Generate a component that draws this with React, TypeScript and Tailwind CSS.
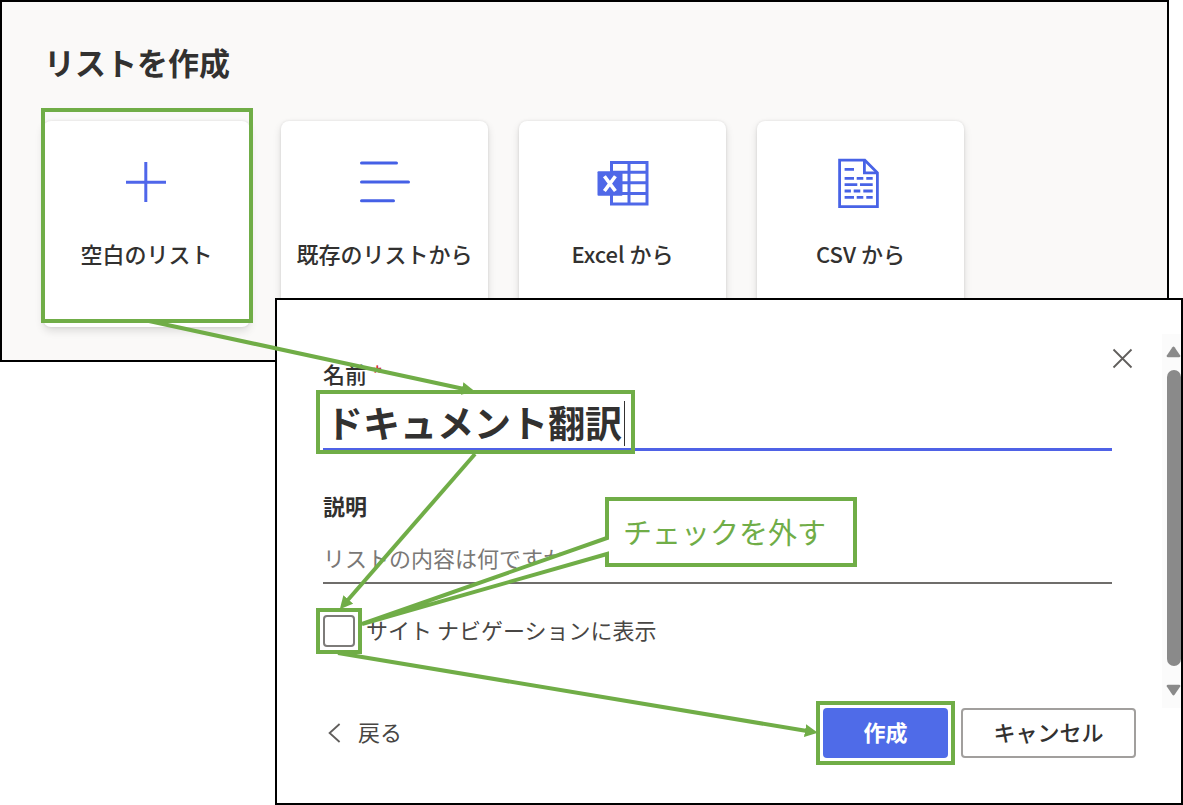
import { useState } from "react";
import type { ReactNode } from "react";

interface SourceCardProps {
  label: string;
  icon: ReactNode;
  highlighted?: boolean;
}

function PlusIcon() {
  return (
    <svg width="42" height="52" viewBox="1 0 42 52" fill="none" stroke="#4f66ea" strokeWidth="3" aria-hidden="true">
      <path d="M1 25.2h40M20.8 5v40" />
    </svg>
  );
}

function LinesIcon() {
  return (
    <svg width="52" height="52" viewBox="0 0 52 52" fill="none" stroke="#4560e6" strokeWidth="3" strokeLinecap="round" aria-hidden="true">
      <path d="M2.5 6h35M2.5 25h47M2.5 43.8h32" />
    </svg>
  );
}

function ExcelIcon() {
  return (
    <svg width="52" height="52" viewBox="0 -4 52 52" fill="none" stroke="#4f68e8" aria-hidden="true">
      <rect x="14.5" y="1.5" width="35.5" height="41.5" strokeWidth="3" />
      <path d="M32 1v42M14 11.3h36M24 21.8h26M14 32.6h36" strokeWidth="3" />
      <rect x="0.5" y="10.3" width="25" height="24.5" rx="1" fill="#4f68e8" stroke="none" />
      <path d="M7.4 15.2L18.4 30M18.4 15.2L7.4 30" stroke="#fff" strokeWidth="3.6" />
    </svg>
  );
}

function CsvIcon() {
  return (
    <svg width="42" height="52" viewBox="2 0 42 52" overflow="visible" fill="none" stroke="#4863e6" aria-hidden="true">
      <path d="M1.6 3.2h25.2l12.6 12.6v33.8H1.6z" strokeWidth="2.8" />
      <path d="M26.4 3.2v12.6h13" strokeWidth="2.8" />
      <path
        d="M6.6 12.3H16M6.6 21.3H16M18.7 21.3h6.6M28.3 21.3h6.4M6.6 27.7h12.7M22 27.7h12.7M6.6 34h6.3M15.7 34h6.6M25.3 34h9.4M6.6 40.3H16M18.7 40.3h6.6M28.3 40.3h6.4"
        strokeWidth="2.8"
      />
    </svg>
  );
}

function SourceCard({ label, icon, highlighted }: SourceCardProps) {
  return (
    <button
      type="button"
      className="relative flex h-[206px] w-[207px] shrink-0 flex-col items-center rounded-lg bg-white pt-9 shadow-[0_4px_8px_rgba(0,0,0,0.12),0_0_3px_rgba(0,0,0,0.1)]"
    >
      {icon}
      <span className="mt-[30px] text-[22px] leading-7 font-medium whitespace-nowrap text-[#323130]">{label}</span>
      {highlighted && (
        <span className="pointer-events-none absolute -top-[13px] -left-0.5 h-[215px] w-[212px] border-4 border-[#70ad47]" />
      )}
    </button>
  );
}

function CreateListPanel() {
  return (
    <section className="mr-[14px] overflow-hidden border-2 border-black bg-[#faf9f8] pt-[38px] pb-[33px] pl-[41px]">
      <h1 className="mb-[37px] pl-px text-[31px] leading-[44px] font-bold text-[#323130]">リストを作成</h1>
      <div className="flex gap-[31px]">
        <SourceCard label="空白のリスト" icon={<PlusIcon />} highlighted />
        <SourceCard label="既存のリストから" icon={<LinesIcon />} />
        <SourceCard label="Excel から" icon={<ExcelIcon />} />
        <SourceCard label="CSV から" icon={<CsvIcon />} />
      </div>
    </section>
  );
}

function ScrollBar() {
  return (
    <div className="mt-[34px] flex w-[19px] flex-col items-end bg-[#fbfbfb] pt-3 pb-3" aria-hidden="true">
      <svg width="15" height="12" viewBox="0 0 15 12" fill="#8a8a8a">
        <path d="M6.4 1.2q1.1-1.2 2.2 0l5.6 8.2q.6 1.8-1 1.8H1.8q-1.6 0-1-1.8z" />
      </svg>
      <div className="my-3 w-[14px] flex-1 rounded-full bg-[#8a8a8a]" />
      <svg className="mt-1.5" width="15" height="12" viewBox="0 0 15 12" fill="#8a8a8a">
        <path d="M6.4 10.8q1.1 1.2 2.2 0l5.6-8.2q.6-1.8-1-1.8H1.8q-1.6 0-1 1.8z" />
      </svg>
    </div>
  );
}

function ListDialog() {
  const [name, setName] = useState("ドキュメント翻訳");
  const [description, setDescription] = useState("");
  const [showInNav, setShowInNav] = useState(false);

  return (
    <section role="dialog" aria-label="リストを作成" className="relative -mt-16 ml-[275px] border-2 border-black bg-white text-[22px] text-[#323130]">
      <div className="flex">
        <form className="flex-1 pt-[59px] pb-[61px] pl-[46px]">
          <label htmlFor="list-name" className="block pb-0.5 leading-7 font-medium">
            名前 <span className="text-[#d13438]">*</span>
          </label>
          <div className="relative">
            <input
              id="list-name"
              type="text"
              value={name}
              onChange={(e) => setName(e.target.value)}
              className="block h-[62px] w-full border-b-3 border-[#4f62e6] pt-1.5 pl-[3px] text-[37px] font-bold outline-none"
            />
            <span className="absolute top-3 left-[301px] h-[45px] w-px bg-[#323130]" />
            <span className="pointer-events-none absolute top-px -left-[7px] h-[64px] w-[319px] border-4 border-[#70ad47]" />
          </div>

          <label htmlFor="list-description" className="mt-10 block pb-0.5 leading-7 font-bold">
            説明
          </label>
          <input
            id="list-description"
            type="text"
            value={description}
            onChange={(e) => setDescription(e.target.value)}
            placeholder="リストの内容は何ですか"
            className="block h-[63px] w-full border-b-2 border-[#6f6d6b] pt-2.5 outline-none placeholder:text-[#7a7876]"
          />

          <div className="mt-[31px] flex items-center gap-[11px]">
            <span className="relative flex">
              <input
                id="show-in-nav"
                type="checkbox"
                checked={showInNav}
                onChange={(e) => setShowInNav(e.target.checked)}
                className="size-8 appearance-none rounded border-2 border-[#7d7b79] bg-white checked:bg-[#4f6be8]"
              />
              <span className="pointer-events-none absolute -inset-[7px] border-4 border-[#70ad47]" />
            </span>
            <label htmlFor="show-in-nav" className="pb-1 leading-7 text-[#484644]">
              サイト ナビゲーションに表示
            </label>
          </div>
        </form>
        <div className="w-[50px] pt-12">
          <button type="button" aria-label="閉じる" className="block">
            <svg width="21" height="21" viewBox="0 0 21 21" fill="none" stroke="#605e5c" strokeWidth="1.8">
              <path d="M1.5 1.5l18 18M19.5 1.5l-18 18" />
            </svg>
          </button>
        </div>
        <ScrollBar />
      </div>

      <div className="flex items-center gap-[13px] pr-[45px] pb-[45px] pl-[51px]">
        <button type="button" className="mr-auto flex items-center gap-4 leading-7 text-[#484644]">
          <svg width="14" height="20" viewBox="0 0 14 20" fill="none" stroke="#605e5c" strokeWidth="1.8">
            <path d="M11.6 1L1.6 10l10 9" />
          </svg>
          <span className="pb-1">戻る</span>
        </button>
        <button type="button" className="relative h-[50px] w-[125px] rounded-sm bg-[#4f6be8] pb-1 font-bold text-white">
          作成
          <span className="pointer-events-none absolute -inset-[7px] border-4 border-[#70ad47]" />
        </button>
        <button type="button" className="h-[50px] w-[175px] rounded-sm border-2 border-[#a19f9d] bg-white pb-1 font-medium">
          キャンセル
        </button>
      </div>
    </section>
  );
}

// Step arrows and the speech bubble drawn over both windows
function Annotations() {
  return (
    <div className="pointer-events-none absolute top-0 left-0">
      <svg width="1183" height="805" viewBox="0 0 1183 805" fill="none" stroke="#70ad47" strokeWidth="4" aria-hidden="true">
        <defs>
          <marker id="head" markerUnits="userSpaceOnUse" markerWidth="13" markerHeight="13" refX="2" refY="6.5" orient="auto">
            <path d="M0 0l13 6.5-13 6.5z" fill="#70ad47" stroke="none" />
          </marker>
        </defs>
        <path d="M149 321L464 389" markerEnd="url(#head)" />
        <path d="M475 454L347 601" markerEnd="url(#head)" />
        <path d="M338 653L807 731" markerEnd="url(#head)" />
        <path d="M607 499H855V565H607V554L362 624L607 538Z" fill="#fff" />
      </svg>
      <p className="absolute top-[497px] left-[605px] flex h-[70px] w-[252px] items-center pl-[18px] text-[29px] whitespace-nowrap text-[#70ad47]">
        チェックを外す
      </p>
    </div>
  );
}

export default function App() {
  return (
    <main className="relative min-w-[1000px] bg-white font-['Noto_Sans_CJK_JP',sans-serif]">
      <CreateListPanel />
      <ListDialog />
      <Annotations />
    </main>
  );
}
